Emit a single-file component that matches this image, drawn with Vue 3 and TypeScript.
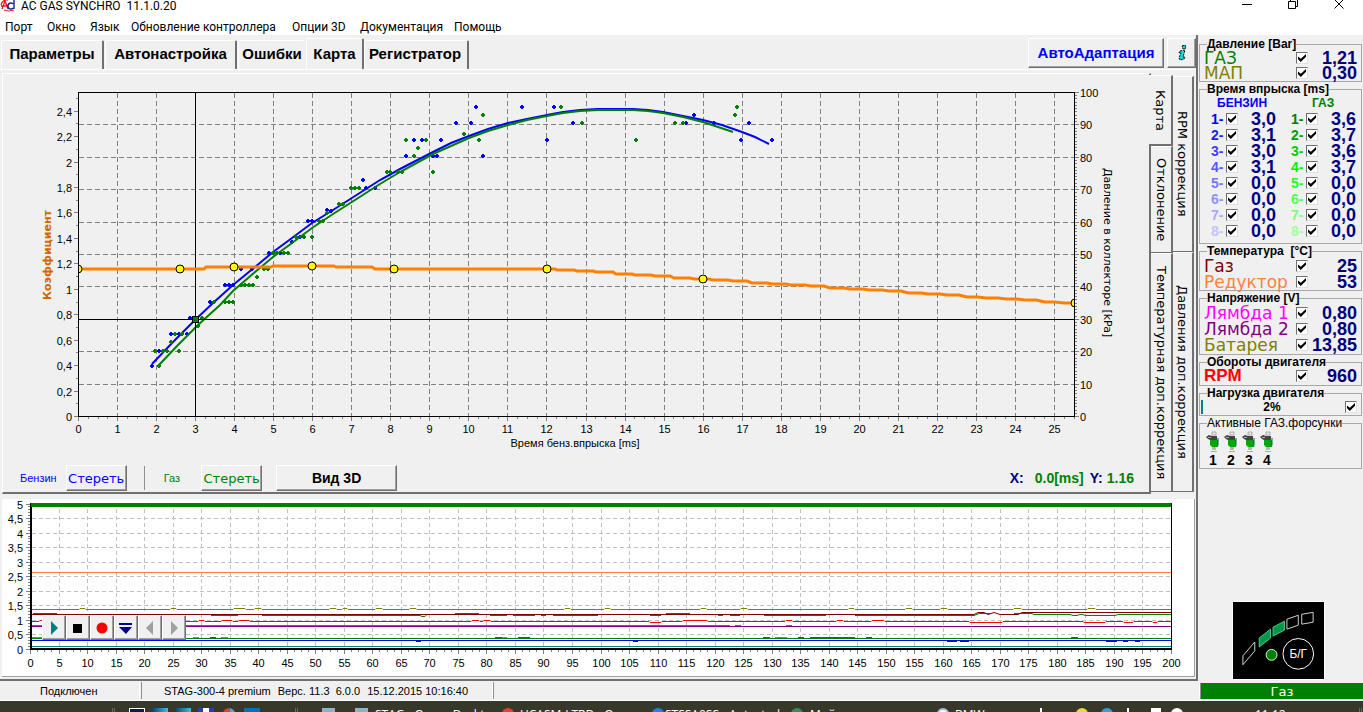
<script setup lang="ts">
import { ref } from 'vue'

const menu = [
  { text: 'Порт', cls: 'm-port' },
  { text: 'Окно', cls: 'm-win' },
  { text: 'Язык', cls: 'm-lang' },
  { text: 'Обновление контроллера', cls: 'm-upd' },
  { text: 'Опции 3D', cls: 'm-opt' },
  { text: 'Документация', cls: 'm-doc' },
  { text: 'Помощь', cls: 'm-help' },
]
const activeTab = ref('Карта')
const tabs = [
  { name: 'Параметры', cls: 'w-params' },
  { name: 'Автонастройка', cls: 'w-auto' },
  { name: 'Ошибки', cls: 'w-err' },
  { name: 'Карта', cls: 'w-map' },
  { name: 'Регистратор', cls: 'w-reg' },
]

const range = (n: number, from = 0) => Array.from({ length: n }, (_, i) => i + from)
const comma = (v: number) => String(v).replace('.', ',')

// Map chart scales
const mx = (ms: number) => Math.round(78 + ms * 39.04) + 0.5
const myK = (k: number) => Math.round(416 - k * 127.2) + 0.5
const myP = (p: number) => Math.round(416 - p * 3.24) + 0.5

type Pt = [number, number]
const line = (pts: Pt[]) => pts.map((p) => p.join(',')).join(' ')

const petrolCurve: Pt[] = [
  [152, 364], [173, 342], [195, 320], [213, 303], [233, 285], [255, 267], [273, 252], [292, 238], [312, 223],
  [333, 210], [355, 196], [380, 180], [400, 169], [433, 152], [451, 143], [469, 136], [488, 129], [508, 123],
  [527, 119], [547, 115], [563, 112], [580, 110], [598, 109], [633, 109], [648, 110], [663, 112], [683, 116],
  [703, 120], [722, 125], [742, 132], [755, 137], [769, 144],
]
const gasCurve: Pt[] = [
  [158, 366], [178, 345], [198, 325], [220, 305], [233, 291], [255, 272], [273, 257], [292, 243], [312, 228],
  [333, 214], [355, 200], [380, 184], [400, 172], [433, 154], [451, 146], [469, 138], [488, 131], [508, 125],
  [527, 120], [547, 116], [563, 113], [580, 111], [598, 110], [633, 110], [648, 111], [663, 113], [683, 117],
  [703, 122], [718, 127], [733, 132],
]
const slope = [270, 271, 272, 274, 275, 276, 278, 279, 280, 281, 283, 284, 285, 286, 288, 289, 290, 291, 293, 294, 295, 297, 298, 299, 300, 302, 303]
const factorLine: Pt[] = [
  [78, 269], [204, 269], [206, 267], [271, 267], [273, 266], [334, 266], [336, 267], [372, 267], [375, 269], [555, 269],
  ...slope.flatMap((y, i): Pt[] => [[Math.round(557 + i * 19.5), y], [Math.round(574 + i * 19.25), y]]),
]
const knots: Pt[] = [[78, 269], [180, 269], [234, 267], [312, 266], [394, 269], [547, 269], [703, 279], [1075, 303]]

const petrolDots: Pt[] = [
  [152, 366], [159, 351], [171, 334], [179, 334], [187, 334], [190, 318], [210, 302], [225, 285], [229, 285], [233, 285],
  [241, 269], [252, 269], [269, 253], [273, 253], [280, 253], [292, 242], [300, 237], [308, 221], [312, 221], [327, 210],
  [331, 211], [363, 180], [375, 188], [366, 188], [406, 156], [414, 140], [422, 140], [441, 140], [433, 156], [437, 156],
  [456, 123], [471, 123], [476, 107], [483, 156], [522, 107], [554, 107], [547, 140], [573, 123], [686, 123], [694, 115],
  [714, 123], [741, 140], [749, 123], [772, 140],
]
const gasDots: Pt[] = [
  [155, 351], [163, 351], [167, 351], [179, 351], [159, 366], [171, 342], [175, 334], [182, 334], [198, 326], [202, 318],
  [214, 302], [225, 302], [229, 302], [233, 302], [241, 285], [245, 285], [249, 285], [253, 285], [257, 277], [264, 269],
  [268, 269], [273, 253], [277, 253], [284, 253], [288, 253], [296, 237], [304, 237], [312, 237], [319, 221], [323, 221],
  [327, 213], [339, 204], [343, 204], [351, 188], [355, 188], [359, 188], [387, 172], [390, 172], [398, 172], [402, 172],
  [406, 140], [426, 140], [418, 148], [414, 156], [433, 172], [464, 134], [479, 140], [483, 115], [561, 107], [582, 123],
  [636, 140], [675, 123], [683, 123], [735, 115], [737, 107],
]
const dotPath = (pts: Pt[]) => pts.map(([x, y]) => `M${x - 1} ${y - 2}h2v1h1v2h-1v1h-2v-1h-1v-2h1z`).join('')

// Oscilloscope scales
const sx = (v: number) => Math.round(30 + v * 5.705) + 0.5
const sy = (v: number) => Math.round(649 - v * 29.1) + 0.5

// Level line with short excursions: [from, to, level]
const trace = (base: number, end: number, bumps: [number, number, number][]) =>
  `M31 ${base}.5` + bumps.map(([a, b, y]) => `H${a}L${a + 1} ${y}.5H${b - 1}L${b} ${base}.5`).join('') + `H${end}`

const traces = [
  { c: '#ff8040', d: trace(572, 1171, []) },
  {
    c: '#808000',
    d: trace(609, 1171, [
      [79, 86, 608], [170, 177, 608], [233, 246, 608], [254, 262, 608], [329, 337, 608], [342, 348, 608], [375, 383, 608],
      [409, 417, 608], [564, 571, 608], [604, 611, 608], [700, 707, 608], [740, 748, 608], [848, 855, 608],
      [905, 913, 608], [940, 948, 608], [1013, 1022, 608], [1087, 1096, 608],
    ]),
  },
  { c: '#008000', d: 'M33 613.5H57M211 615.5H238M262 615.5H420L422 616.5H425L427 614.5M455 613.5H479M490 615.5H507M513 615.5H535M541 615.5H546M553 615.5H598M650 615.5H661M666 613.5H690M718 615.5H723M730 615.5H740M764 615.5H826M855 615.5H974L979 613.5H990M1014 613.5H1032L1034 614.5H1070L1073 615.5H1077L1080 614.5H1083L1085 615.5H1115L1118 614.5H1171' },
  { c: '#800000', d: 'M31 614.5H974L978 612.5H984L988 614.5L994 612.5L1000 614.5H1018L1022 612.5H1171' },
  {
    c: '#ff0000',
    d: trace(621, 1171, [
      [39, 60, 620], [198, 205, 620], [221, 233, 620], [238, 250, 620], [471, 480, 620], [483, 491, 620], [649, 662, 622],
      [682, 708, 620], [785, 793, 620], [836, 844, 620], [871, 885, 620], [969, 1003, 622], [1083, 1106, 622],
      [1123, 1134, 622], [1152, 1158, 622],
    ]),
  },
  { c: '#800080', d: trace(626, 1171, []) },
  { c: '#ff00ff', d: 'M31 625.5H730M735 625.5H741M786 625.5H792' },
  { c: '#00e000', d: 'M31 637.5H42M193 637.5H199M221 637.5H228M500 637.5H507M775 637.5H787M815 637.5H823M836 637.5H844M1135 638.5H1140' },
  { c: '#008000', d: 'M31 638.5H1171M210 637.5H216M495 637.5H502M518 637.5H530M763 637.5H770M798 637.5H804M810 637.5H855M866 637.5H872M1071 637.5H1078' },
  { c: '#0000ff', d: 'M31 640.5H1171M416 641.5H421M633 641.5H638M947 641.5H957M960 641.5H969M1106 641.5H1117M1123 641.5H1128M1135 641.5H1140' },
  { c: '#008080', d: trace(646, 1171, []) },
]

const petrol = ['3,0', '3,1', '3,0', '3,1', '0,0', '0,0', '0,0', '0,0']
const gas = ['3,6', '3,7', '3,6', '3,7', '0,0', '0,0', '0,0', '0,0']
</script>

<template>
  <div class="app">
    <header class="titlebar">
      <svg class="logo" width="17" height="14" viewBox="0 0 17 14" aria-hidden="true">
        <path d="M8 0A6 6 0 0 0 1 5M2 9L5 1L8 9M1 6H7M10 3A4 4 0 0 0 9 9" fill="none" stroke="#e02020" stroke-width="1.4" />
        <path d="M14 0V9M13 4A3 3 0 1 0 13 8" fill="none" stroke="#203090" stroke-width="1.5" />
        <path d="M4 10Q9 12 14 10" fill="none" stroke="#e02020" />
      </svg>
      <span class="app-name">AC GAS SYNCHRO&nbsp; 11.1.0.20</span>
      <div class="win-buttons">
        <button aria-label="Свернуть"><svg width="12" height="12" viewBox="0 0 12 12"><path d="M1 4.500H11" stroke="#000" /></svg></button>
        <button aria-label="Восстановить"><svg width="12" height="12" viewBox="0 0 12 12"><path d="M1.500 1.500H8.500V8.500H1.500ZM3.500 1V-1M10.500 -1V6.500H9" fill="none" stroke="#000" /></svg></button>
        <button aria-label="Закрыть"><svg width="12" height="12" viewBox="0 0 12 12"><path d="M1.500 -.500L10.500 8.500M10.500 -.500L1.500 8.500" stroke="#000" /></svg></button>
      </div>
    </header>
    <nav class="menu">
      <a v-for="m in menu" :key="m.text" :class="m.cls" href="#">{{ m.text }}</a>
    </nav>

    <div class="body">
      <main class="workspace">
        <div class="topbar">
          <div class="tabs" role="tablist">
            <button
              v-for="t in tabs" :key="t.name" role="tab" class="tab" :class="[t.cls, { active: activeTab === t.name }]"
              :aria-selected="activeTab === t.name" @click="activeTab = t.name"
            >{{ t.name }}</button>
          </div>
          <button class="btn adapt">АвтоАдаптация</button>
          <button class="btn info" aria-label="Информация">
            <svg width="12" height="18" viewBox="0 0 12 18">
              <path d="M6 2L9 1L10 4L7 5ZM4 7L9 6L7 13L9 13L8 15L4 16L3 14L5 9L3 9Z" fill="#00e0e0" stroke="#000" stroke-dasharray="2 1" />
            </svg>
          </button>
        </div>

        <div class="map-area">
          <section class="map-panel">
            <svg class="chart" viewBox="3 74 1146 386" role="img" aria-label="Карта">
              <g class="grid" shape-rendering="crispEdges">
                <path v-for="i in range(25, 1)" :key="'v' + i" :d="`M${mx(i)} 93V416`" />
                <path v-for="i in range(9, 1)" :key="'h' + i" :d="`M79 ${myP(i * 10)}H1074`" />
              </g>
              <g class="ticks" shape-rendering="crispEdges">
                <path v-for="i in range(103)" :key="'x' + i" :d="`M${mx(i / 4)} 417v${i % 4 ? 2 : 4}`" />
                <path v-for="i in range(26)" :key="'k' + i" :d="`M78 ${myK(i / 10)}h${i % 2 ? -2 : -4}`" />
                <path v-for="i in range(101)" :key="'p' + i" :d="`M1075 ${myP(i)}h${i % 10 ? 2 : 4}`" />
              </g>
              <rect x="78.5" y="92.5" width="996" height="324" fill="none" stroke="#000" shape-rendering="crispEdges" />
              <g class="axis" text-anchor="middle">
                <text v-for="i in range(26)" :key="i" :x="mx(i)" y="433">{{ i }}</text>
                <text x="575" y="447">Время бенз.впрыска [ms]</text>
              </g>
              <g class="axis" text-anchor="end">
                <text v-for="i in range(13)" :key="i" x="72" :y="myK(i / 5) + 4">{{ comma(i / 5) }}</text>
              </g>
              <g class="axis">
                <text v-for="i in range(11)" :key="i" x="1080" :y="myP(i * 10) + 4">{{ i * 10 }}</text>
              </g>
              <text class="factor-title" transform="translate(51 300) rotate(-90)">Коэффициент</text>
              <text class="press-title" transform="translate(1104 168) rotate(90)">Давление в коллекторе [kPa]</text>
              <path :d="dotPath(petrolDots)" fill="#0000ff" shape-rendering="crispEdges" />
              <polyline :points="line(petrolCurve)" class="curve" stroke="#0000ff" />
              <path :d="dotPath(gasDots)" fill="#008000" shape-rendering="crispEdges" />
              <polyline :points="line(gasCurve)" class="curve" stroke="#008000" />
              <path d="M195.500 93V416M79 319.500H1074" stroke="#000" shape-rendering="crispEdges" />
              <rect x="192.500" y="316.500" width="6" height="6" fill="#008000" stroke="#000" />
              <clipPath id="plot"><rect x="79" y="93" width="995" height="323" /></clipPath>
              <g clip-path="url(#plot)">
                <polyline :points="line(factorLine)" fill="none" stroke="#ff8000" stroke-width="3" />
                <circle v-for="k in knots" :key="k[0]" :cx="k[0]" :cy="k[1]" r="4" fill="#ffff00" stroke="#000" />
              </g>
            </svg>
            <div class="controls">
              <span class="fuel petrol-c">Бензин</span>
              <button class="btn erase petrol-c">Стереть</button>
              <i class="divider"></i>
              <span class="fuel gas-c">Газ</span>
              <button class="btn erase gas-c">Стереть</button>
              <button class="btn view3d">Вид 3D</button>
              <output class="coords"><b>X:</b><span class="cx">0.0[ms]</span><b>Y:</b><span class="cy">1.16</span></output>
            </div>
          </section>
          <div class="vtabs col1" role="tablist">
            <button class="vtab v-map active" role="tab">Карта</button>
            <button class="vtab v-dev" role="tab">Отклонение</button>
            <button class="vtab v-temp" role="tab">Температурная доп.коррекция</button>
          </div>
          <div class="vtabs col2" role="tablist">
            <button class="vtab v-rpm" role="tab">RPM коррекция</button>
            <button class="vtab v-press" role="tab">Давления доп.коррекция</button>
          </div>
        </div>

        <section class="scope">
          <svg class="chart" viewBox="2 499 1192 177" role="img" aria-label="Осциллограф">
            <g class="sgrid" shape-rendering="crispEdges">
              <path v-for="i in range(39, 1)" :key="'v' + i" :d="`M${sx(i * 5)} 509V648`" />
              <path v-for="i in range(9, 1)" :key="'h' + i" :d="`M32 ${sy(i / 2)}H1170`" />
            </g>
            <g class="ticks" shape-rendering="crispEdges">
              <path v-for="i in range(161)" :key="'x' + i" :d="`M${sx(i * 1.25)} 650v${i % 4 ? 2 : 4}`" />
              <path v-for="i in range(51)" :key="'y' + i" :d="`M30 ${sy(i / 10)}h${i % 5 ? -2 : -4}`" />
            </g>
            <path v-for="(t, i) in traces" :key="i" :d="t.d" :stroke="t.c" fill="none" />
            <path d="M1171.500 503V650" stroke="#000" />
            <path d="M30.500 503V649H1172" stroke="#000" stroke-width="2" fill="none" shape-rendering="crispEdges" />
            <path d="M31 505H1171" stroke="#008000" stroke-width="4" />
            <g class="axis" text-anchor="end">
              <text v-for="i in range(11)" :key="i" x="23" :y="sy(i / 2) + 4">{{ comma(i / 2) }}</text>
            </g>
            <g class="axis" text-anchor="middle">
              <text v-for="i in range(41)" :key="i" :x="sx(i * 5)" y="667">{{ i * 5 }}</text>
            </g>
          </svg>
          <div class="player">
            <button class="btn" aria-label="Пуск"><svg viewBox="0 0 16 16"><path d="M5 1L12 8L5 15Z" fill="#008080" /></svg></button>
            <button class="btn" aria-label="Стоп"><svg viewBox="0 0 16 16"><path d="M3 4H12V13H3Z" fill="#000" /></svg></button>
            <button class="btn" aria-label="Запись"><svg viewBox="0 0 16 16"><circle cx="8" cy="8" r="5.500" fill="#f00" /></svg></button>
            <button class="btn" aria-label="Сохранить"><svg viewBox="0 0 16 16"><path d="M1 3H14V5H1ZM1 7H14L8 14Z" fill="#000080" /></svg></button>
            <button class="btn" aria-label="Назад"><svg viewBox="0 0 16 16"><path d="M11 1L4 8L11 15Z" fill="#a0a0a0" /></svg></button>
            <button class="btn" aria-label="Вперёд"><svg viewBox="0 0 16 16"><path d="M5 1L12 8L5 15Z" fill="#a0a0a0" /></svg></button>
          </div>
        </section>
      </main>

      <aside class="sidebar">
        <fieldset class="g-press">
          <legend>Давление [Bar]</legend>
          <label class="row c-gas"><span>ГАЗ</span><input type="checkbox" checked><b>1,21</b></label>
          <label class="row c-olive"><span>МАП</span><input type="checkbox" checked><b>0,30</b></label>
        </fieldset>
        <fieldset class="g-inj">
          <legend>Время впрыска [ms]</legend>
          <div class="inj-head"><span class="petrol-c">БЕНЗИН</span><span class="gas-c">ГАЗ</span></div>
          <div v-for="(p, i) in petrol" :key="i" class="inj-row">
            <label :class="'p' + (i + 1)"><span>{{ i + 1 }}-</span><input type="checkbox" checked><b>{{ p }}</b></label>
            <label :class="'g' + (i + 1)"><span>{{ i + 1 }}-</span><input type="checkbox" checked><b>{{ gas[i] }}</b></label>
          </div>
        </fieldset>
        <fieldset class="g-temp">
          <legend>Температура&nbsp; [°C]</legend>
          <label class="row c-maroon"><span>Газ</span><input type="checkbox" checked><b>25</b></label>
          <label class="row c-coral"><span>Редуктор</span><input type="checkbox" checked><b>53</b></label>
        </fieldset>
        <fieldset class="g-volt">
          <legend>Напряжение [V]</legend>
          <label class="row c-magenta"><span>Лямбда 1</span><input type="checkbox" checked><b>0,80</b></label>
          <label class="row c-purple"><span>Лямбда 2</span><input type="checkbox" checked><b>0,80</b></label>
          <label class="row c-olive"><span>Батарея</span><input type="checkbox" checked><b>13,85</b></label>
        </fieldset>
        <fieldset class="g-rpm">
          <legend>Обороты двигателя</legend>
          <label class="row c-red"><span class="rpm">RPM</span><input type="checkbox" checked><b>960</b></label>
        </fieldset>
        <fieldset class="g-load">
          <legend>Нагрузка двигателя</legend>
          <label class="load"><i class="load-bar"></i><span>2%</span><input type="checkbox" checked></label>
        </fieldset>
        <fieldset class="g-act">
          <legend>Активные ГАЗ.форсунки</legend>
          <div class="injectors">
            <div v-for="n in 4" :key="n">
              <svg width="16" height="22" viewBox="0 0 16 22">
                <path d="M7 1H11V4H7Z" fill="#e8e8e8" stroke="#888" stroke-width=".6" />
                <path d="M1 6L4 4L7 5H12V9H5L3 8Z" fill="#444" /><path d="M3 6H6V7H3Z" fill="#aaa" />
                <path d="M5 9H13V14L12 16H7L5 14Z" fill="#00a800" /><path d="M13 7V14L12 16" stroke="#064" fill="none" />
                <path d="M7 16H11V19H7Z" fill="#b8b8b8" /><path d="M6 20.500H12" stroke="#60e060" />
              </svg>
              <span>{{ n }}</span>
            </div>
          </div>
        </fieldset>
        <button class="gauge" aria-label="Переключатель бензин/газ">
          <svg viewBox="0 0 92 77">
            <g fill="none" stroke="#d0d0d0">
              <path d="M10 54L22 40V49L10 63Z" />
              <path d="M54.500 17L66 13V23L54.500 27Z" />
              <path d="M69.500 12L81 10V20L69.500 22Z" />
            </g>
            <g fill="#009848" stroke="#50c890">
              <path d="M26.500 36L38 27V36L26.500 45Z" />
              <path d="M40.500 25L52 19V28L40.500 34Z" />
            </g>
            <circle cx="39" cy="53" r="5.500" fill="#008000" stroke="#d0ffd0" />
            <circle cx="66" cy="52" r="15.500" fill="none" stroke="#fff" />
            <text x="66" y="56" text-anchor="middle">Б/Г</text>
          </svg>
        </button>
      </aside>
    </div>

    <footer class="status">
      <span class="pane conn">Подключен</span>
      <span class="pane device"><span>STAG-300-4 premium</span><span>Верс. 11.3&nbsp; 6.0.0</span><span>15.12.2015 10:16:40</span></span>
      <span class="pane rest"></span>
      <span class="mode">Газ</span>
    </footer>

    <div class="taskbar">
      <i class="sep"></i><i class="ic win"></i><i class="ic scr"></i><i class="ic scr"></i><i class="ic disk"></i><i class="ic chrome"></i><i class="ic out"></i>
      <i class="sep"></i><i class="ic win2"></i><i class="ic win3"></i><span>STAG - Opera Desktop</span>
      <i class="dot red"></i><span>UCASM-LTRD - Opera</span>
      <i class="dot blue"></i><span>STSSA0SS - Autostudy</span>
      <i class="dot green"></i><span>Мой</span>
      <i class="dot white"></i><span>BMW</span>
      <i class="ic chip"></i><i class="dot yellow"></i><i class="dot sky"></i><i class="ic chip"></i><i class="ic flag"></i><i class="dot shield"></i><span>11:12</span><i class="sep"></i>
    </div>
  </div>
</template>

<style>
body { margin: 0; overflow: hidden; }
</style>

<style scoped>
* { box-sizing: border-box; }
.app {
  height: 100vh; display: flex; flex-direction: column; overflow: hidden; background: #f0f0f0;
  font-family: "Liberation Sans", Arial, sans-serif; font-size: 11px; color: #000;
}
button { font: inherit; color: inherit; margin: 0; padding: 0; border: 0; background: none; white-space: nowrap; }
.petrol-c { color: #0000ff; }
.gas-c { color: #008000; }

.titlebar { height: 15px; flex: none; display: flex; align-items: flex-start; background: #fff; font: 12px/12px Roboto, "Noto Sans", sans-serif; }
.logo { flex: none; margin-right: 4px; }
.app-name { flex: 1; }
.win-buttons { display: flex; gap: 34px; padding-right: 18px; }
.win-buttons button { width: 12px; height: 12px; line-height: 0; }
.menu { height: 20px; flex: none; display: flex; padding-left: 5px; background: #fff; font: 12px/24px Roboto, "Noto Sans", sans-serif; white-space: nowrap; }
.menu a { color: #000; text-decoration: none; }
.m-port { width: 42px; }
.m-win { width: 43px; }
.m-lang { width: 41px; }
.m-upd { width: 161px; }
.m-opt { width: 68px; }
.m-doc { width: 94px; }

.body { flex: 1; min-height: 0; display: grid; grid-template-columns: minmax(0, 1fr) 165px; }
.workspace { display: flex; flex-direction: column; border-right: 2px solid #707070; border-bottom: 2px solid #707070; }

.topbar { display: flex; height: 35px; align-items: flex-end; border-bottom: 1px solid #fff; padding: 0 0 0 1px; }
.tabs { display: flex; align-items: flex-end; flex: 1; }
.tab { height: 29px; border: 1px solid #fff; border-right: 2px solid #707070; border-bottom: 0; border-radius: 2px 2px 0 0; font-size: 15px; font-weight: bold; margin-right: 1px; padding-bottom: 3px; }
.tab.active { height: 31px; margin-right: 0; padding-bottom: 1px; }
.w-params { width: 103px; }
.w-auto { width: 132px; }
.w-err { width: 67px; border-right: 0; }
.w-map { width: 58px; }
.w-reg { width: 105px; padding-right: 2px; }
.btn { border: 1px solid; border-color: #fff #707070 #707070 #fff; box-shadow: inset -1px -1px #a0a0a0; }
.topbar .btn { height: 30px; margin-bottom: 1px; }
.topbar .adapt { width: 136px; color: #0000ff; font-size: 15px; font-weight: bold; margin-right: 3px; padding-bottom: 2px; }
.info { width: 29px; display: grid; place-items: center; }

.map-area { display: flex; margin: 3px 2px 0 2px; }
.map-panel { flex: 1; min-width: 0; border: 1px solid #fff; border-right: 2px solid #707070; border-bottom: 2px solid #707070; }
.chart { display: block; width: 100%; height: auto; }
.grid path { stroke: #808080; stroke-dasharray: 5 3; }
.sgrid path { stroke: #c0c0c0; stroke-dasharray: 4 3; }
.ticks path { stroke: #808080; }
.axis text { font-size: 11px; }
.curve { fill: none; stroke-width: 2; }
.factor-title { font: bold 11px "DejaVu Sans", sans-serif; fill: #d06800; }
.press-title { font: 11px "DejaVu Sans", sans-serif; }
.controls { height: 32px; display: flex; align-items: center; padding: 4px 15px 0 17px; }
.fuel { font-size: 11px; }
.erase { width: 61px; height: 26px; font: 13px "DejaVu Sans", sans-serif; margin-left: 9px; }
.divider { width: 1px; height: 24px; background: #909090; margin: 0 19px 0 17px; }
.gas-c.erase { margin-left: 21px; }
.view3d { width: 121px; height: 26px; margin-left: 14px; font-size: 14px; font-weight: bold; }
.coords { margin-left: auto; display: flex; font-size: 14px; font-weight: bold; color: #008000; }
.coords b { color: #000080; }
.cx { margin: 0 6px 0 11px; }
.cy { margin-left: 4px; }

.vtabs { display: flex; flex-direction: column; flex: none; padding-bottom: 2px; }
.col1 { width: 22px; padding-top: 2px; }
.col2 { width: 21px; padding-top: 3px; }
.vtab { writing-mode: vertical-rl; font: 13px/20px "DejaVu Sans", sans-serif; border-right: 2px solid #707070; border-bottom: 1px solid #707070; border-top: 1px solid #fff; text-align: center; }
.col1 .vtab { width: 22px; }
.col2 .vtab { width: 21px; }
.v-map { flex: 0 0 71px; margin-left: -2px; background: #f0f0f0; border-bottom-width: 2px; }
.col1 .v-map { width: 24px; }
.v-dev { flex: 0 0 107px; }
.v-temp { flex: 1; }
.v-rpm { flex: 0 0 176px; }
.v-press { flex: 1; }

.scope { position: relative; margin: 5px 1px 0 2px; background: #fff; border-right: 1px solid #a0a0a0; border-bottom: 1px solid #a0a0a0; }
.player { position: absolute; left: 40px; bottom: 36px; display: flex; background: #f0f0f0; }
.player .btn { width: 24px; height: 25px; display: grid; place-items: center; }
.player svg { width: 16px; height: 16px; }

.sidebar { display: flex; flex-direction: column; padding: 3px 1px 0 1px; }
fieldset { margin: 0 0 1px; padding: 0 1px 0 4px; border: 1px solid #a8a8a8; min-width: 0; }
legend { height: 12px; line-height: 12px; padding: 0; margin-left: 3px; font-size: 12px; font-weight: bold; white-space: nowrap; }
.row { display: grid; grid-template-columns: minmax(0, 1fr) 12px 52px; align-items: center; height: 16px; color: inherit; white-space: nowrap; }
.row span { font: 17px/16px "DejaVu Sans", sans-serif; }
.row .rpm { font-family: "Liberation Sans", sans-serif; font-weight: bold; }
.row b, .inj-row b { font-size: 18px; line-height: 16px; text-align: right; color: #000080; font-weight: bold; }
.row b { padding-right: 3px; }
input[type="checkbox"] { appearance: none; width: 12px; height: 12px; margin: 0; background: #fff; border: 1px solid; border-color: #707070 #e0e0e0 #e0e0e0 #707070; }
input[type="checkbox"]:checked::after { content: ""; display: block; width: 8px; height: 8px; margin: 1px; background: #000; clip-path: polygon(0 30%, 35% 60%, 100% 0, 100% 35%, 35% 100%, 0 65%); }
.g-press .row { height: 15px; }
.g-press { padding-bottom: 1px; }
.g-inj { padding-bottom: 4px; }
.inj-head { display: flex; height: 16px; line-height: 16px; font-size: 12px; font-weight: bold; padding-left: 13px; }
.inj-head span:first-child { width: 95px; }
.inj-row { display: grid; grid-template-columns: 80px 1fr; height: 16px; padding-left: 7px; }
.inj-row label { display: grid; grid-template-columns: 15px 12px 38px; align-items: center; }
.inj-row span { font-size: 14px; line-height: 16px; font-weight: bold; }
.p1 { color: #0000ff; } .p2 { color: #2020f0; } .p3 { color: #4040f8; } .p4 { color: #5858ff; }
.p5 { color: #7878ff; } .p6 { color: #9090ff; } .p7 { color: #a8a8ff; } .p8 { color: #c4c4ff; }
.g1 { color: #008000; } .g2 { color: #00a000; } .g3 { color: #00d000; } .g4 { color: #00f000; }
.g5 { color: #20ff20; } .g6 { color: #50ff50; } .g7 { color: #78ff78; } .g8 { color: #a0ffa0; }
.g-temp, .g-volt { padding-top: 1px; }
.g-volt, .g-rpm { padding-bottom: 1px; }
.g-load { padding-left: 0; }
.g-load legend { margin-left: 7px; }
.load { display: flex; align-items: center; height: 16px; padding-right: 3px; font-size: 12px; font-weight: bold; }
.load-bar { width: 2px; height: 14px; margin-left: 1px; background: #008080; }
.load span { flex: 1; text-align: center; padding-right: 4px; }
.g-act { padding-bottom: 1px; }
.g-act legend { font-weight: normal; }
.injectors { display: flex; gap: 2px; padding: 2px 0 0 1px; }
.injectors div { display: flex; flex-direction: column; align-items: center; font-size: 14px; font-weight: bold; line-height: 14px; }
.c-gas { color: #008000; } .c-olive { color: #808000; } .c-maroon { color: #800000; } .c-coral { color: #ff8040; }
.c-magenta { color: #ff00ff; } .c-purple { color: #800080; } .c-red { color: #ff0000; }
.gauge { width: 93px; height: 79px; margin: auto auto 1px 33px; background: #000; border: 1px solid #fff; }
.gauge svg { display: block; width: 100%; height: 100%; }
.gauge text { font: 12px "Liberation Sans", sans-serif; fill: #fff; }

.status { flex: none; height: 20px; display: flex; padding: 1px 0; font-size: 11px; line-height: 18px; border-bottom: 1px solid #fff; white-space: nowrap; }
.pane { border-right: 1px solid #fff; }
.conn { width: 140px; padding-left: 40px; }
.device { width: 352px; padding-left: 22px; display: flex; gap: 7px; border-left: 1px solid #909090; margin-left: 1px; }
.rest { flex: 1; border-left: 1px solid #909090; }
.mode { width: 163px; background: #008000; color: #fff; font: 13px/17px "DejaVu Sans", sans-serif; text-align: center; border-left: 1px solid #909090; margin-top: 1px; }

.taskbar {
  flex: none; height: 11px; background: #36382a; display: grid; align-items: start; padding: 7px 0 0 112px;
  grid-template-columns: 17px 23px 23px 23px 25px 21px 51px 27px 33px 20px 127px 18px 132px 13px 126px 19px 127px 18px 85px 36px 25px 26px 24px 20px 84px 104px 1fr;
  color: #fff; font: 12px/14px "Open Sans", sans-serif; overflow: hidden; white-space: nowrap;
}
.sep { width: 3px; height: 12px; border: 1px solid #66685c; border-width: 0 1px; }
.ic { width: 16px; height: 12px; background: #fff; }
.win { background: #0a2040; border: 1px solid #fff; }
.scr { background: linear-gradient(90deg, #104060, #40c0e0); }
.disk { background: linear-gradient(90deg, #2040c0 30%, #fff 30% 70%, #2040c0 70%); }
.chrome { width: 12px; border-radius: 6px; background: linear-gradient(90deg, #e04030 60%, #60a0e0 60%); }
.out { background: #0070c0; }
.win2, .win3 { width: 13px; background: #60c0e0; border: 2px solid #a0b0b8; }
.dot { width: 12px; height: 12px; border-radius: 6px; background: #fff; }
.red { background: #e84030; } .blue { background: #2080f0; } .green { background: #309060; } .yellow { background: #e8d830; } .sky { background: #30a0e0; }
.white { border: 2px solid #a0c0e0; }
.chip { width: 2px; }
.flag { width: 10px; }
</style>
